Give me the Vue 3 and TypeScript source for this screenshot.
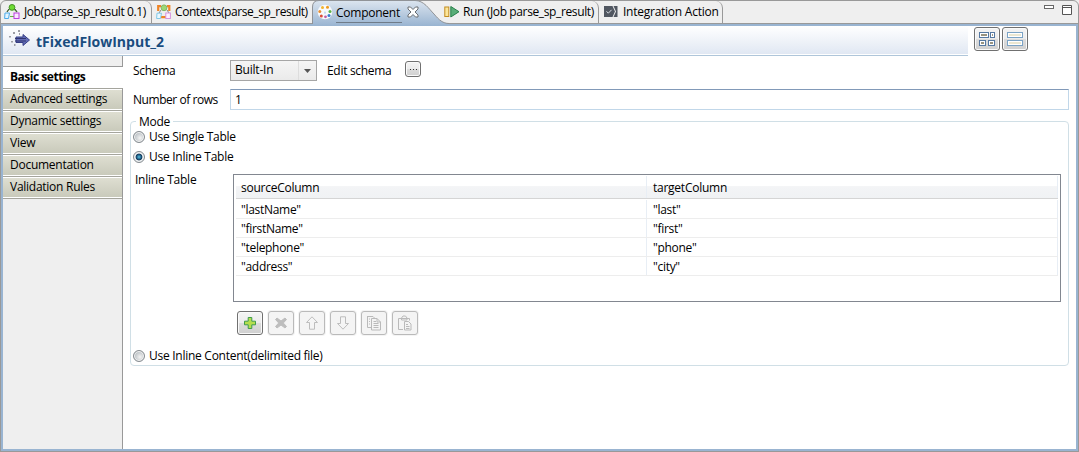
<script setup lang="ts">
import { ref } from 'vue'

const sections = ['Basic settings', 'Advanced settings', 'Dynamic settings', 'View', 'Documentation', 'Validation Rules']
const section = ref('Basic settings')
const mode = ref('inline')
const rows = [
  { source: '"lastName"', target: '"last"' },
  { source: '"firstName"', target: '"first"' },
  { source: '"telephone"', target: '"phone"' },
  { source: '"address"', target: '"city"' },
]
</script>

<template>
  <div class="view">
    <div class="tabs">
      <div class="tab job">
        <svg width="16" height="16" viewBox="0 0 16 16">
          <path d="M5 5 L3 8 M10 5 L13 8 M6 12.5 H10" stroke="#62b83c" fill="none" stroke-width="1.2" />
          <circle cx="8" cy="3.4" r="2.9" fill="#6fdc33" stroke="#459425" />
          <path d="M1 9 H5.5 L4.5 14.5 H0.6 Z" fill="#e1f4ff" stroke="#4cabeb" />
          <rect x="10" y="9" width="5" height="5.5" fill="#fae6ff" stroke="#bb3cdf" />
          <path d="M3 8 L5 5 M13 8 L11 5" stroke="#444" />
        </svg>
        <span class="t-job">Job(parse_sp_result 0.1)</span>
      </div>
      <div class="tab contexts">
        <svg width="16" height="16" viewBox="0 0 16 16">
          <path d="M5 2.2 H2.2 V7 M11 2.2 H13.3 V7 M5 13.2 H10" stroke="#ef8425" stroke-width="2.2" fill="none" />
          <path d="M5 6 L3 9 M11 6 L13 9" stroke="#888" />
          <circle cx="8" cy="3.8" r="2.9" fill="#9bd875" stroke="#83b566" />
          <path d="M1 9.2 H5.5 L4.5 14.5 H0.6 Z" fill="#e8f8ff" stroke="#83c9e8" />
          <rect x="9.8" y="9" width="4.6" height="5.5" fill="#fff0ff" stroke="#d694dc" />
        </svg>
        <span class="t-contexts">Contexts(parse_sp_result)</span>
      </div>
      <div class="tab component">
        <svg class="tabshape" width="137" height="26" viewBox="0 0 137 26">
          <defs><linearGradient id="tabfill" x1="0" y1="0" x2="0" y2="1"><stop stop-color="#dce5ef" /><stop offset="1" stop-color="#99b4d1" /></linearGradient></defs>
          <path d="M0.5 26 V7 Q0.5 0.5 7 0.5 H103 C112 0.5 117 9 122 14 C127 20 131 23.5 137 23.5 V26 Z" fill="url(#tabfill)" />
          <path d="M0.5 24 V7 Q0.5 0.5 7 0.5 H103 C112 0.5 117 9 122 14 C127 20 131 23.5 137 23.5" fill="none" stroke="#909397" />
        </svg>
        <svg class="over" width="16" height="16" viewBox="0 0 16 16">
          <circle cx="8" cy="8" r="7.3" fill="#f7f9fb" />
          <circle cx="5.5" cy="3.5" r="1.5" fill="#f2b42f" /><circle cx="10.5" cy="3.3" r="1.5" fill="#ee9b20" />
          <circle cx="2.8" cy="7.6" r="1.5" fill="#e98e31" /><circle cx="13" cy="7.5" r="1.5" fill="#5bb344" />
          <circle cx="4.3" cy="12" r="1.5" fill="#dd4d3a" /><circle cx="8" cy="8.7" r="1.1" fill="#c6d8ef" />
          <circle cx="8.5" cy="12.8" r="1.4" fill="#bf5fa7" /><circle cx="12" cy="11.6" r="1.5" fill="#397ed0" />
        </svg>
        <span class="over t-component">Component</span>
        <svg class="over close" width="12" height="12" viewBox="0 0 12 12">
          <path d="M1 1 H3.5 L6 3.5 L8.5 1 H11 V3 L8 6 L11 9 V11 H8.5 L6 8.5 L3.5 11 H1 V9 L4 6 L1 3 Z" fill="#fff" stroke="#6a6e73" />
        </svg>
      </div>
      <div class="tab run">
        <svg width="16" height="14" viewBox="0 0 16 14">
          <rect x="0.8" y="2" width="4" height="9.5" fill="#fce69b" stroke="#c28c21" />
          <path d="M6.8 1.5 L15 6.7 L6.8 12 Z" fill="#58ad78" stroke="#278049" />
        </svg>
        <span class="t-run">Run (Job parse_sp_result)</span>
      </div>
      <div class="tab integration">
        <svg width="14" height="11" viewBox="0 0 14 11">
          <path d="M0 0 H8.5 L11 5.5 L8.5 11 H0 Z M9.5 0 H13.5 V11 H9.5 L12 5.5 Z" fill="#515761" />
          <path d="M2.5 5.3 L4.3 7.2 L7.6 3.8" stroke="#dce0e7" fill="none" />
        </svg>
        <span class="t-integration">Integration Action</span>
      </div>
      <svg class="winctl" width="30" height="14" viewBox="0 0 30 14">
        <rect x="0.5" y="3.5" width="9" height="3" fill="#fff" stroke="#686868" />
        <path d="M18.5 3.5 H27.5 V12.5 H18.5 Z M18 5.5 H28" fill="#fff" stroke="#555" />
      </svg>
    </div>

    <div class="pane">
      <header class="header">
        <div class="title">
          <svg width="22" height="18" viewBox="0 0 22 18">
            <g fill="#9b9da4"><rect x="9" y="0" width="2" height="2" /><rect x="4" y="2" width="2" height="2" /><rect x="0" y="6" width="2" height="1.5" /><rect x="2" y="11" width="2" height="1.5" /><rect x="5" y="14" width="1.5" height="2" /><rect x="10" y="3" width="1" height="2" /></g>
            <path d="M7 7 H14 V4.5 L20.5 10 L14 15.5 V12.5 H7 Z" fill="#626cb6" stroke="#353e86" />
            <path d="M6 8.5 H17 M6 11 H17" stroke="#303571" />
          </svg>
          <h1>tFixedFlowInput_2</h1>
        </div>
        <div class="layouts">
          <button><svg width="16" height="14" viewBox="0 0 16 14"><g fill="#fff" stroke="#5679a2"><rect x=".5" y=".5" width="9" height="5" /><rect x="11.5" y=".5" width="4" height="5" /><rect x=".5" y="8.5" width="6" height="5" /><rect x="9.5" y="8.5" width="6" height="5" /></g><path d="M2 3 H8 M13 3 H14 M2 11 H5 M11 11 H14" stroke="#999481" stroke-width="2" /></svg></button>
          <button><svg width="16" height="14" viewBox="0 0 16 14"><g fill="#fff" stroke="#7ba3c5"><rect x=".5" y=".5" width="15" height="5" /><rect x=".5" y="8.5" width="15" height="5" /></g><path d="M2 3 H14 M2 11 H14" stroke="#ebe7d1" stroke-width="2" /></svg></button>
        </div>
      </header>

      <div class="body">
        <nav class="side">
          <div class="sidetop"></div>
          <div v-for="s in sections" :key="s" class="sec" :class="{ active: s === section }" @click="section = s"><span>{{ s }}</span></div>
          <div class="rest"></div>
        </nav>

        <main class="main">
          <div class="schema">
            <span class="lbl">Schema</span>
            <div class="select"><span>Built-In</span><i><svg width="7" height="4" viewBox="0 0 7 4"><path d="M0 0 H7 L3.5 4 Z" fill="#555" /></svg></i></div>
            <span class="edit">Edit schema</span>
            <button class="dots"><b></b><b></b><b></b></button>
          </div>
          <div class="count">
            <span class="lbl rowslbl">Number of rows</span>
            <div class="input">1</div>
          </div>

          <section class="group">
            <div class="legend"><span>Mode</span></div>
            <div class="radio" @click="mode = 'single'"><i :class="{ on: mode === 'single' }"></i><span>Use Single Table</span></div>
            <div class="radio second" @click="mode = 'inline'"><i :class="{ on: mode === 'inline' }"></i><span>Use Inline Table</span></div>
            <div class="inline">
              <span class="inlinelbl">Inline Table</span>
              <div class="grid">
                <div class="row head"><span>sourceColumn</span><span>targetColumn</span></div>
                <div v-for="r in rows" :key="r.source" class="row"><span>{{ r.source }}</span><span>{{ r.target }}</span></div>
              </div>
            </div>
            <div class="tools">
              <button><svg width="14" height="14" viewBox="0 0 14 14"><path d="M5.2 1.5 H8.8 V5.2 H12.5 V8.8 H8.8 V12.5 H5.2 V8.8 H1.5 V5.2 H5.2 Z" fill="#b5de4e" stroke="#3f9c4c" /></svg></button>
              <button class="off"><svg width="14" height="14" viewBox="0 0 14 14"><path d="M3 2 L7 5 L11 2 L12.5 3.5 L9.3 7 L12.5 10.5 L11 12 L7 9 L3 12 L1.5 10.5 L4.7 7 L1.5 3.5 Z" fill="#bdbdbd" stroke="#bdbdbd" /></svg></button>
              <button class="off"><svg width="14" height="14" viewBox="0 0 14 14"><path d="M7 .8 L12.5 6.5 H9.5 V13.2 H4.5 V6.5 H1.5 Z" fill="#f5f5f5" stroke="#bdbdbd" /></svg></button>
              <button class="off"><svg width="14" height="14" viewBox="0 0 14 14"><path d="M7 13.2 L12.5 7.5 H9.5 V.8 H4.5 V7.5 H1.5 Z" fill="#f5f5f5" stroke="#bdbdbd" /></svg></button>
              <button class="off"><svg width="16" height="16" viewBox="0 0 16 16"><path d="M1 1.5 H7 L9 3.5 M1.5 1.5 V12.5 H5 M5.5 3.5 H11 L14.5 7 V15 H5.5 Z M11 3.5 V7 H14.5 M7.5 6.5 H10 M7.5 8.5 H12.5 M7.5 10.5 H12.5 M7.5 12.5 H12.5 M3 4 H4 M3 6.5 H4 M3 9 H4" fill="none" stroke="#bababa" /></svg></button>
              <button class="off"><svg width="16" height="16" viewBox="0 0 16 16"><path d="M6 14.5 H1.5 V3.5 H12.5 V5.5 M4.5 5 V3 L6 1 H8.5 L10 3 V5 Z M7.5 6.5 H11.5 L14 9 V15 H7.5 Z M9 9.5 H11 M9 11.5 H12.5 M9 13.5 H12.5" fill="none" stroke="#bababa" /></svg></button>
            </div>
            <div class="radio last" @click="mode = 'content'"><i :class="{ on: mode === 'content' }"></i><span>Use Inline Content(delimited file)</span></div>
          </section>
        </main>
      </div>
    </div>
  </div>
</template>

<style>
html, body { margin: 0; overflow: hidden; background: #fff; }
</style>
<style scoped>
* { box-sizing: border-box; }
.view { width: 1079px; height: 452px; display: flex; flex-direction: column; background: #efefef; font: 12px/16px "Open Sans", "Noto Sans", sans-serif; letter-spacing: -.3px; color: #000; white-space: nowrap; cursor: default; }
svg { display: block; flex: none; }
button { padding: 0; margin: 0; font: inherit; display: flex; align-items: center; justify-content: center; border: 1px solid #707070; border-radius: 3px; background: linear-gradient(#f4f4f4, #ececec 48%, #dcdcdc 52%, #d0d0d0); box-shadow: inset 0 0 0 1px #fafafa; }
.tabs { height: 24px; flex: none; display: flex; border: 1px solid #999; border-radius: 6px 6px 0 0; }
.tab { display: flex; align-items: center; position: relative; height: 22px; padding-bottom: 1px; }
.job { width: 151px; padding-left: 3px; border-right: 1px solid #999; border-radius: 0 7px 0 0; }
.job span { margin-left: 4px; letter-spacing: -.42px; }
.contexts { width: 160px; padding-left: 4px; }
.contexts span { margin-left: 3px; letter-spacing: -.43px; }
.component { width: 131px; padding-left: 5px; letter-spacing: -.25px; }
.tabshape { position: absolute; left: 0; top: -1px; }
.over { position: relative; }
.t-component { margin-left: 3px; border-bottom: 1px solid #6f7b88; height: 18px; margin-top: 4px; width: 66px; }
.close { margin-left: 5px; }
.run { width: 156px; padding-left: 1px; border-right: 1px solid #999; border-radius: 0 7px 0 0; }
.run span { margin-left: 3px; letter-spacing: -.37px; }
.integration { width: 124px; padding-left: 5px; border-right: 1px solid #999; border-radius: 0 7px 0 0; letter-spacing: -.25px; }
.integration span { margin-left: 5px; }
.winctl { margin: 1px 4px 0 auto; }
.pane { flex: 1; border: 2px solid #99b4d1; margin: 0 1px 1px; outline: 1px solid #999; display: flex; flex-direction: column; background: #fff; min-height: 0; }
.header { height: 30px; display: flex; flex: none; }
.title { width: 965px; border-bottom: 1px solid #afc6da; background: linear-gradient(#fff, #e1e8f3 95%, #fff 97%); display: flex; padding: 4px 0 0 6px; }
h1 { margin: 2px 0 0 5px; font-size: 14px; line-height: 19px; color: #194c7f; letter-spacing: .03px; }
.layouts { display: flex; gap: 2px; padding: 1px 0 0 6px; }
.layouts button { width: 26px; height: 24px; }
.body { flex: 1; display: flex; min-height: 0; }
.side { width: 120px; flex: none; display: flex; flex-direction: column; background: #efefef; }
.sidetop { height: 11px; border-right: 1px solid #999; border-bottom: 1px solid #999; }
.sec { height: 22px; padding: 2px 0 0 7px; border-right: 1px solid #999; border-top: 1px solid #a5a59d; background: linear-gradient(#fff 1px, #deded1 1px, #c9cabb 20px, #fff 20px); letter-spacing: -.26px; }
.sec.active { height: 21px; border: 0; background: #fff; font-weight: 700; letter-spacing: -.48px; }
.rest { flex: 1; border-top: 1px solid #a5a59d; border-right: 1px solid #999; }
.main { flex: 1; padding: 4px 7px 0; display: flex; flex-direction: column; }
.schema { display: flex; align-items: flex-start; height: 29px; padding-left: 3px; }
.lbl { width: 97px; margin: 3px 0 0; }
.rowslbl { letter-spacing: -.45px; }
.select { width: 87px; height: 21px; border: 1px solid #a6a6a6; background: linear-gradient(#f5f5f5, #eaeaea); display: flex; padding: 1px 0 0 4px; margin-right: 10px; letter-spacing: -.2px; }
.select i { margin: -1px 0 0 auto; width: 18px; border-left: 1px solid #ddd; display: flex; align-items: center; justify-content: center; }
.edit { width: 78px; margin-top: 3px; }
.dots { width: 16px; height: 16px; margin-top: 1px; gap: 2px; }
.dots b { width: 1px; height: 1px; background: #333; }
.count { display: flex; padding-left: 3px; height: 21px; }
.input { flex: 1; height: 21px; border: 1px solid #c1d7e9; border-top-color: #8199b8; padding: 2px 4px; }
.group { margin: 11px 0 0; height: 245px; width: 939px; border: 1px solid #d0dfe6; border-radius: 4px; }
.legend { height: 8px; padding-left: 5px; line-height: 12px; }
.legend span { display: block; width: max-content; height: 12px; background: #fff; padding: 0 3px; position: relative; top: -6px; }
.radio { display: flex; height: 20px; align-items: center; padding-left: 2px; margin-top: -3px; line-height: 12px; }
.radio.second { margin-top: 0; }
.radio i { width: 12px; height: 12px; border-radius: 50%; border: 1px solid #858b90; background: radial-gradient(circle at 60% 60%, #f4f4f4, #bcc2c6 65%); box-shadow: inset 0 0 0 1px #f5f5f5; }
.radio i.on { background: radial-gradient(circle, #59c4e5 0, #174f77 35%, #153451 45%, #dce3e8 52%); }
.radio span { margin-left: 4px; letter-spacing: -.27px; }
.inline { display: flex; margin-top: 7px; align-items: flex-start; }
.inlinelbl { width: 98px; margin-left: 4px; margin-top: -2px; letter-spacing: -.25px; }
.grid { width: 828px; height: 128px; border: 1px solid #828790; background: #fff; padding: 1px 2px; }
.row { height: 19px; display: grid; grid-template-columns: 411px 1fr; border-bottom: 1px solid #ededed; line-height: 20px; }
.row span { height: 18px; padding-left: 5px; border-right: 1px solid #e8eef5; }
.row span + span { padding-left: 6px; }
.head { height: 23px; line-height: 24px; border-bottom-color: #d5d5d5; background: linear-gradient(#fff 45%, #f3f4f6 48%, #f0f2f4); margin-bottom: 1px; letter-spacing: -.25px; }
.head span { height: 22px; }
.tools { display: flex; gap: 5px; margin: 9px 0 0 106px; }
.tools button { width: 26px; height: 24px; }
.tools .off { border-color: #bababa; background: #f4f4f4; box-shadow: 0 0 0 1px #f4f4f4; }
.last { margin-top: 11px; }
</style>
